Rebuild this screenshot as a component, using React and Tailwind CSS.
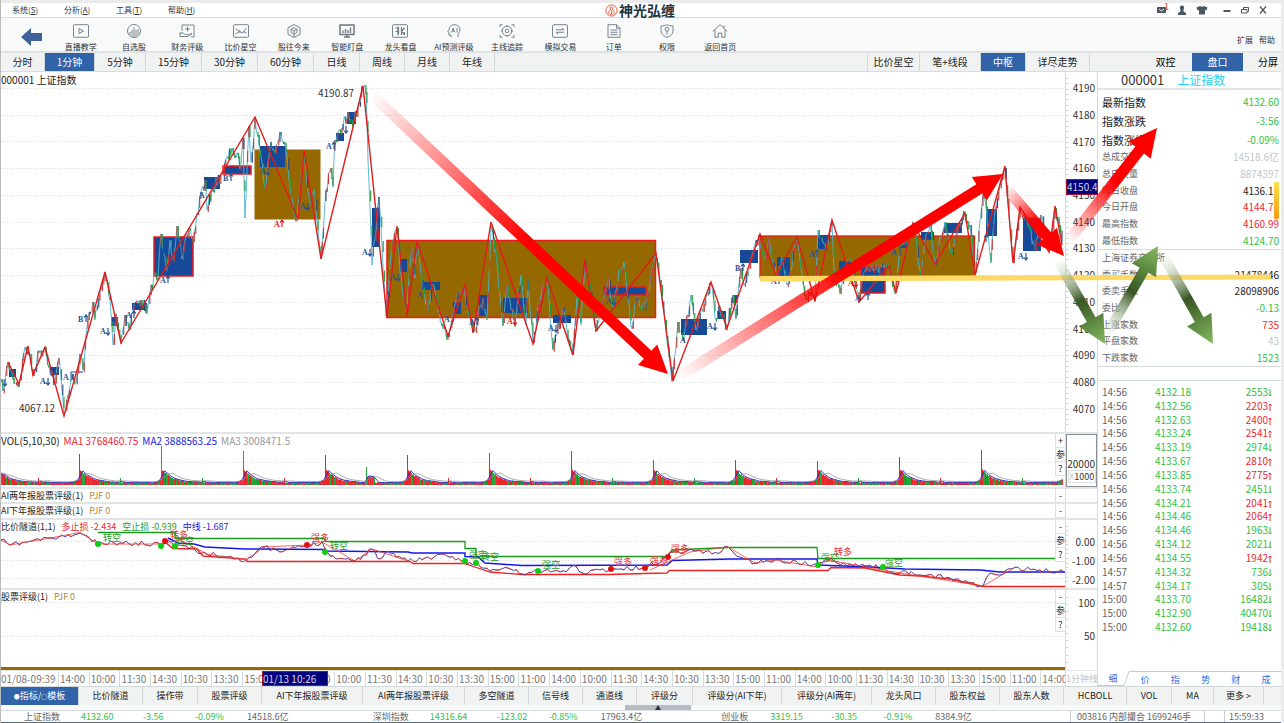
import React from 'react';
import clsx from 'clsx';

const MENUS = [
  ['系统', 'S'],
  ['分析', 'A'],
  ['工具', 'T'],
  ['帮助', 'H'],
];

const TOOLS = [
  { label: '直播教学', icon: 'live' },
  { label: '自选股', icon: 'pick' },
  { label: '财务评级', icon: 'finance' },
  { label: '比价星空', icon: 'compare' },
  { label: '股往今来', icon: 'cube' },
  { label: '智能盯盘', icon: 'monitor' },
  { label: '龙头看盘', icon: 'dragon' },
  { label: 'AI预测评级', icon: 'ai' },
  { label: '主线追踪', icon: 'target' },
  { label: '模拟交易', icon: 'swap' },
  { label: '订单', icon: 'order' },
  { label: '权限', icon: 'shield' },
  { label: '返回首页', icon: 'home' },
];

const PERIODS = [
  { label: '分时', w: 'w-[44px]' },
  { label: '1分钟', w: 'w-[50px]', active: true },
  { label: '5分钟', w: 'w-[51px]' },
  { label: '15分钟', w: 'w-[56px]' },
  { label: '30分钟', w: 'w-[56px]' },
  { label: '60分钟', w: 'w-[56px]' },
  { label: '日线', w: 'w-[46px]' },
  { label: '周线', w: 'w-[45px]' },
  { label: '月线', w: 'w-[45px]' },
  { label: '年线', w: 'w-[45px]' },
];

const VIEWS = [
  { label: '比价星空', w: 'w-[52px]' },
  { label: '笔+线段', w: 'w-[61px]' },
  { label: '中枢', w: 'w-[45px]', active: true },
  { label: '详尽走势', w: 'w-[64px]' },
];

const INDICATORS = [
  { label: '比价隧道', w: 'w-[64px]' },
  { label: '操作带', w: 'w-[55px]' },
  { label: '股票评级', w: 'w-[64px]' },
  { label: 'AI下年报股票评级', w: 'w-[101px]' },
  { label: 'AI两年报股票评级', w: 'w-[102px]' },
  { label: '多空隧道', w: 'w-[64px]' },
  { label: '信号线', w: 'w-[54px]' },
  { label: '通道线', w: 'w-[54px]' },
  { label: '评级分', w: 'w-[56px]' },
  { label: '评级分(AI下年)', w: 'w-[89px]' },
  { label: '评级分(AI两年)', w: 'w-[90px]' },
  { label: '龙头风口', w: 'w-[64px]' },
  { label: '股东权益', w: 'w-[64px]' },
  { label: '股东人数', w: 'w-[64px]' },
  { label: 'HCBOLL', w: 'w-[63px]' },
  { label: 'VOL', w: 'w-[45px]' },
  { label: 'MA', w: 'w-[42px]' },
  { label: '更多 >', w: 'w-[50px]' },
];

const UP = 'text-[#ea2a30]';
const DOWN = 'text-[#2fbf45]';
const MUTED = 'text-[#c4c4c4]';
const DARK = 'text-[#222]';

const HEADLINE = [
  ['最新指数', '4132.60', DOWN],
  ['指数涨跌', '-3.56', DOWN],
  ['指数涨幅', '-0.09%', DOWN],
];

const SUMMARY = [
  ['总成交额', '14518.6亿', MUTED],
  ['总成交量', '8874397', MUTED],
  ['昨日收盘', '4136.16', DARK],
  ['今日开盘', '4144.76', UP],
  ['最高指数', '4160.99', UP],
  ['最低指数', '4124.70', DOWN],
];

const EXCHANGE = [
  ['上海证券交易所', '', DARK],
  ['委买手数', '21478446', DARK],
  ['委卖手数', '28098906', DARK],
  ['委比', '-0.13', DOWN],
  ['上涨家数', '735', UP],
  ['平盘家数', '43', MUTED],
  ['下跌家数', '1523', DOWN],
];

const TICKS = [
  ['14:56', '4132.18', 2553, 0],
  ['14:56', '4132.56', 2203, 1],
  ['14:56', '4132.63', 2400, 1],
  ['14:56', '4133.24', 2541, 1],
  ['14:56', '4133.19', 2974, 0],
  ['14:56', '4133.67', 2810, 1],
  ['14:56', '4133.85', 2775, 1],
  ['14:56', '4133.74', 2451, 0],
  ['14:56', '4134.21', 2041, 1],
  ['14:56', '4134.46', 2064, 1],
  ['14:56', '4134.46', 1963, 0],
  ['14:56', '4134.12', 2021, 0],
  ['14:56', '4134.55', 1942, 1],
  ['14:57', '4134.32', 736, 0],
  ['14:57', '4134.17', 305, 0],
  ['15:00', '4133.70', 16482, 0],
  ['15:00', '4132.90', 40470, 0],
  ['15:00', '4132.60', 19418, 0],
];

const PRICE_LEVELS = [4190, 4180, 4170, 4160, 4150, 4140, 4130, 4120, 4110, 4100, 4090, 4080, 4070];
const TIME_CYCLE = ['14:00', '10:00', '11:30', '14:30', '10:30', '13:30', '15:00', '11:00'];

// price path, drawn with a little noise on top
const PATH = [
  [1, 380], [3, 391], [8, 362], [13, 378], [19, 384], [25, 347], [29, 352], [33, 374], [39, 351], [45, 347], [49, 366],
  [55, 383], [59, 358], [64, 413], [71, 378], [76, 383], [80, 354], [83, 370], [88, 318], [93, 302], [95, 318], [105, 273],
  [110, 298], [113, 345], [116, 314], [121, 342], [125, 315], [129, 328], [134, 305], [141, 300], [147, 312], [154, 275],
  [158, 278], [161, 234], [166, 270], [170, 240], [173, 260], [177, 226], [182, 259], [189, 228], [193, 240], [201, 192],
  [205, 180], [207, 210], [212, 190], [222, 172], [232, 148], [241, 166], [243, 138], [245, 218], [249, 126], [251, 162],
  [255, 118], [258, 135], [265, 188], [271, 142], [275, 152], [280, 132], [286, 150], [293, 205], [297, 219], [304, 152],
  [310, 206], [314, 190], [321, 259], [326, 190], [331, 168], [333, 185], [335, 140], [342, 128], [348, 112], [354, 122],
  [363, 87], [366, 92], [368, 160], [372, 265], [379, 197], [386, 316], [392, 240], [397, 228], [400, 270], [406, 312],
  [412, 247], [415, 278], [417, 243], [422, 280], [428, 311], [434, 285], [438, 312], [448, 335], [458, 292], [464, 287],
  [470, 316], [474, 330], [483, 298], [487, 318], [491, 226], [497, 262], [503, 325], [507, 285], [515, 325], [521, 275],
  [526, 325], [528, 280], [533, 343], [540, 300], [547, 278], [553, 350], [563, 307], [572, 354], [577, 298], [581, 325],
  [585, 262], [596, 329], [608, 278], [613, 308], [619, 270], [624, 262], [631, 327], [637, 298], [646, 308], [655, 255],
  [660, 280], [665, 320], [672, 380], [678, 322], [684, 338], [691, 295], [696, 330], [703, 310], [711, 283], [715, 318],
  [720, 310], [727, 327], [733, 295], [736, 318], [741, 268], [744, 285], [752, 255], [759, 235], [764, 260], [769, 238],
  [776, 275], [783, 258], [787, 285], [797, 239], [806, 298], [811, 292], [815, 300], [818, 230], [826, 250], [832, 221],
  [834, 270], [840, 292], [846, 265], [852, 262], [859, 301], [862, 280], [868, 270], [884, 268], [889, 267], [895, 292],
  [900, 245], [905, 240], [913, 225], [921, 273], [926, 235], [930, 225], [935, 263], [945, 222], [951, 252], [957, 230],
  [965, 214], [970, 225], [975, 274], [983, 195], [985, 200], [991, 261], [995, 210], [1005, 168], [1013, 261], [1020, 208],
  [1028, 225], [1035, 250], [1041, 215], [1049, 250], [1055, 208], [1062, 243],
];

const ZIGZAG =
  '8,362 19,384 28,346 33,375 45,347 64,416 105,272 121,343 255,117 298,219 304,150 321,259 363,86 387,318 397,226 407,316 417,241 448,336 465,284 473,333 491,222 533,344 547,278 573,355 585,259 596,331 656,253 673,381 711,282 727,328 760,234 776,275 797,237 815,301 832,220 859,302 889,266 896,293 913,223 935,264 965,213 975,275 1005,166 1013,263 1020,207 1049,252 1055,206 1062,245';

// x, y, width, height, outlined
const BLUE_BOXES = [
  [9, 369, 7, 8], [50, 367, 9, 8], [111, 317, 7, 9], [132, 303, 15, 7], [154, 237, 39, 39, 1], [204, 177, 16, 12],
  [223, 166, 28, 8, 1], [260, 146, 25, 21], [336, 133, 8, 8], [347, 112, 9, 12], [372, 208, 8, 39], [400, 259, 7, 13],
  [422, 282, 18, 8], [453, 302, 8, 12], [479, 295, 8, 21], [503, 298, 25, 15], [553, 315, 18, 8], [604, 287, 42, 8, 1],
  [681, 319, 26, 16], [717, 311, 9, 8], [732, 295, 6, 8], [740, 250, 18, 13], [777, 257, 13, 19], [818, 235, 10, 14],
  [839, 261, 12, 9], [861, 267, 24, 26, 1], [900, 238, 7, 10], [921, 232, 13, 8], [944, 223, 18, 10], [986, 209, 11, 27],
  [1023, 218, 18, 33],
];

// x, baseline, letter, direction
const MARKS = [
  [-3, 385, '', -1], [40, 384, 'A', -1], [63, 380, 'A', 0], [78, 322, 'B', 1], [100, 334, 'A', -1], [126, 318, 'A', 1],
  [160, 283, 'A', 1], [199, 198, 'A', 0], [223, 181, 'B', 1], [260, 174, 'A', -1], [300, 209, 'A', -1], [326, 149, 'A', 1],
  [338, 132, '', -1], [362, 255, 'A', -1], [390, 280, 'A', -1], [417, 298, 'A', 0], [444, 322, 'A', 0], [469, 325, 'A', 1],
  [548, 331, 'A', -1], [606, 304, 'A', -1], [680, 343, 'A', 0], [707, 329, 'A', -1], [735, 271, 'B', 1], [771, 284, 'A', 1],
  [809, 257, 'A', 1], [855, 301, 'A', 0], [860, 300, '', 1], [891, 255, 'A', 0], [978, 242, '', 1], [1018, 259, 'A', -1],
];

const RED_MARKS = [
  [274, 227, 'A', 1], [507, 324, 'A', -1], [848, 286, 'A', -1],
];

function seeded(seed) {
  let s = seed;
  return () => {
    s = (s * 16807) % 2147483647;
    return s / 2147483647;
  };
}

function jitter(points, step, amount, seed) {
  const rnd = seeded(seed);
  const out = [];
  for (let i = 0; i < points.length - 1; i++) {
    const [x0, y0] = points[i];
    const [x1, y1] = points[i + 1];
    const n = Math.max(1, Math.round((x1 - x0) / step));
    for (let k = 0; k < n; k++) {
      const t = k / n;
      const off = k === 0 ? 0 : (rnd() - 0.5) * amount;
      out.push([x0 + (x1 - x0) * t, y0 + (y1 - y0) * t + off]);
    }
  }
  out.push(points[points.length - 1]);
  return out;
}

const toPoints = (list) => list.map(([x, y]) => `${x.toFixed(1)},${y.toFixed(1)}`).join(' ');

const PRICE = jitter(PATH, 1.3, 12, 7);
const CANDLES = PRICE.slice(1).map((p, i) => ({
  x: p[0],
  y0: PRICE[i][1],
  y1: p[1],
}));

const SPIKES = [30, 31, 39, 34, 30, 30, 32, 34, 25, 25, 24, 28, 35];
const GREEN_SPIKES = [2, 3];

const VOLUME = (() => {
  const rnd = seeded(42);
  const bars = [];
  for (let s = 0; s < 13; s++) {
    for (let t = 0; t < 82; t++) {
      const x = -3 + s * 82 + t;
      if (x < 1 || x > 1063) continue;
      const late = t > 74 ? (t - 74) * 0.4 : 0;
      let h = 1.8 + 14 * Math.exp(-t / 10) + late + rnd() * 1.3;
      let green = rnd() > 0.52;
      if (t === 0) {
        h = SPIKES[s];
        green = GREEN_SPIKES.includes(s);
      }
      if (t === 1) green = false;
      if (t === 41) h = s === 4 ? 18 : 7;
      if (s === 4 && t > 41 && t < 50) h += 6;
      bars.push({ x, h, green });
    }
  }
  return bars;
})();

const smooth = (n, lift) =>
  VOLUME.map((b, i) => {
    const from = Math.max(0, i - n);
    const part = VOLUME.slice(from, i + 1);
    return [b.x, 485 - lift - part.reduce((a, p) => a + Math.min(p.h, 18), 0) / part.length];
  });

const TUNNEL_PRICE = jitter(
  [
    [1, 540], [10, 545], [50, 538], [65, 537], [80, 533], [98, 544], [120, 543], [160, 544], [168, 540], [180, 545],
    [195, 550], [207, 554], [232, 557], [246, 560], [264, 547], [280, 552], [308, 545], [322, 542], [330, 556], [345, 559],
    [355, 561], [372, 549], [380, 559], [388, 551], [408, 561], [425, 558], [447, 556], [464, 561], [475, 564], [490, 571],
    [508, 568], [522, 574], [538, 571], [560, 572], [576, 566], [582, 573], [600, 570], [645, 568], [667, 557], [672, 552],
    [700, 550], [712, 554], [728, 547], [740, 557], [755, 563], [775, 560], [817, 565], [828, 560], [850, 564], [870, 565],
    [900, 573], [920, 575], [950, 578], [983, 586], [990, 573], [1000, 575], [1012, 569], [1040, 570], [1064, 572],
  ],
  3,
  5,
  11
);

const SIGNALS = [
  [103, 541, '转空', 0], [170, 538, '转多', 1], [176, 544, '转空', 0], [311, 541, '强多', 1], [330, 549, '转空', 0],
  [469, 558, '强空', 0], [481, 560, '转空', 0], [542, 568, '强空', 0], [614, 565, '强多', 1], [650, 564, '强多', 1],
  [671, 552, '强多', 1], [821, 561, '强空', 0], [834, 555, '转多', 1], [885, 566, '强空', 0],
];

const DOTS = [
  [98, 544, 0], [161, 546, 0], [175, 546, 0], [325, 552, 0], [465, 561, 0], [476, 563, 0], [538, 571, 0], [818, 565, 0],
  [883, 567, 0], [165, 541, 1], [307, 545, 1], [611, 569, 1], [645, 568, 1], [668, 557, 1],
];

const ICONS = {
  live: (
    <>
      <rect x="0.5" y="0.7" width="15" height="12.600" rx="1" />
      <path d="M6 4.5v5l4.5-2.5z" />
    </>
  ),
  pick: (
    <>
      <circle cx="8" cy="7" r="6.5" />
      <path d="M4 8v3M6 6v6.500M8 3.5v10M10 6v6.500M12 5v6" />
    </>
  ),
  finance: (
    <>
      <path d="M3 7V1h12v12h-3M8.5 2.5v5M6 5h5" />
      <path d="M1 8.5v4.5M1 12.5h8l4-2.5c-1-1-2 0-3.500.5H6.500M1 9h3l2 1.500" />
    </>
  ),
  compare: (
    <>
      <rect x="0.500" y="0.7" width="15" height="12.600" rx="1" />
      <path d="M2.500 10l4-2.500 3 1.500 4-5M2.500 5l3 1.500M10 7.500l3.500 1.500" />
      <circle cx="6.500" cy="7.500" r="0.700" />
    </>
  ),
  cube: (
    <>
      <path d="M8 0.500l6 3.200v6.600L8 13.500l-6-3.200V3.700z" />
      <path d="M8 3.700l3 1.600v3.200L8 10.200 5 8.500V5.300zM8 7v6M8 7l3-1.700M8 7L5 5.300" />
    </>
  ),
  monitor: (
    <>
      <path strokeWidth="1.500" d="M1 1h14v9.500H1zM5 13h6M8 11v2" />
      <path strokeWidth="1.300" d="M4 6.500V9M6.500 5v4M9 6v3M11.500 3.500V9" />
    </>
  ),
  dragon: (
    <>
      <rect x="0.500" y="0.7" width="15" height="12.600" rx="1" />
      <path strokeWidth="1.200" d="M3.500 4h3v6M3.500 7.500h3M6 2.500v9M9.500 3v8M9.500 7L12.500 4M9.500 7l3 4M12.500 8v3" />
    </>
  ),
  ai: (
    <>
      <path d="M5 13.300V11H3V8.500L1.700 7.500 3 5.500C3 2.500 5.500 0.700 8.300 0.700c3.500 0 5.700 2.300 5.700 5.300 0 2.500-2 3.500-2 5v2.300" />
      <path d="M5.500 8.500L7.200 4l1.700 4.500M6 7h2.400M11 4v4.500" />
    </>
  ),
  target: (
    <>
      <circle cx="8" cy="7" r="4.800" />
      <circle cx="8" cy="7" r="1.800" />
      <path d="M1 3V0.700h2.500M15 3V0.700h-2.500M1 11v2.300h2.500M15 11v2.300h-2.500M8 1v1.500M8 11.500V13M2 7h1.500M12.500 7H14" />
    </>
  ),
  swap: (
    <>
      <rect x="0.500" y="0.7" width="15" height="12.600" rx="1.500" />
      <path d="M4 5.800h8L9.800 4M12 8.300H4l2.200 1.800" />
    </>
  ),
  order: (
    <>
      <path d="M2 0.700h8.500l3.500 3.500v9.100H2zM10.500 0.700v3.500H14" />
      <path d="M4.500 6h7M4.500 8.300h7M4.500 10.600h7" />
    </>
  ),
  shield: (
    <>
      <path d="M8 0.700c2 1 4 1.300 6 1.300v5c0 3-2.500 5.300-6 6.300-3.500-1-6-3.300-6-6.300V2c2 0 4-0.300 6-1.300z" />
      <circle cx="8" cy="5.200" r="1.900" />
      <path d="M8 7v3.500" />
    </>
  ),
  home: (
    <path d="M0.700 7.500L8 0.700l7.300 6.800M3 6v7.300h3.300V9h3.400v4.300H13V6M12 1.500v2.500" />
  ),
};

const ToolIcon = ({ name }) => (
  <svg viewBox="0 0 16 14" className="h-[14px] w-4" fill="none" stroke="#6d7680" strokeWidth="0.9">
    {ICONS[name]}
  </svg>
);

const TitleBar = () => (
  <header className="flex h-[15px] items-center border-b border-[#d9dddf] bg-white">
    <nav className="flex flex-1 items-center pl-[11px]">
      {MENUS.map(([label, key]) => (
        <button key={label} className="w-[52px] text-left text-[8px] leading-3 text-[#333]">
          {label}(<u>{key}</u>)
        </button>
      ))}
    </nav>
    <div className="flex items-center gap-px">
      <svg viewBox="0 0 14 14" className="size-[13px]" fill="none" stroke="#e8502f">
        <circle cx="7" cy="7" r="6" strokeWidth="1" />
        <path d="M7 3c-2 0-2 2.500-0.500 3-2.500 0.500-3 3-2 5M7 3c2 0 2 2.500 0.500 3 2.500 0.500 3 3 2 5M7 7v4M5.500 11h3" strokeWidth="1" />
      </svg>
      <h1 className="text-[14px] leading-[14px] font-bold text-[#22343c]">神光弘缠</h1>
    </div>
    <div className="flex flex-1 items-center justify-end gap-2 pr-[13px] text-[#4a5660]">
      <button aria-label="消息" className="relative">
        <svg viewBox="0 0 12 10" className="h-[10px] w-3" fill="currentColor">
          <rect x="1" y="2" width="9" height="6" rx="1" />
          <path d="M3 4l2.500 2L8 4" stroke="#fff" fill="none" />
        </svg>
        <span className="absolute -top-[3px] -right-px text-[9px] leading-[10px] text-[#f33]">1</span>
      </button>
      <button aria-label="用户">
        <svg viewBox="0 0 12 10" className="h-[10px] w-3" fill="currentColor">
          <circle cx="6" cy="2.700" r="2.200" />
          <path d="M4.800 4h2.400l0.500 2.500L10 8v2H2V8l2.300-1.500z" />
        </svg>
      </button>
      <button aria-label="皮肤" className="mr-[6px]">
        <svg viewBox="0 0 12 10" className="h-[10px] w-3" fill="currentColor">
          <path d="M4 1c1 1 3 1 4 0l3.500 1.500-1 2.800L9 5v4.500H3V5l-1.500 0.300-1-2.800z" />
        </svg>
      </button>
      <button aria-label="最小化">
        <svg viewBox="0 0 10 10" className="size-[10px]" stroke="currentColor">
          <path d="M1.500 6h7" strokeWidth="2" />
        </svg>
      </button>
      <button aria-label="还原">
        <svg viewBox="0 0 10 10" className="size-[10px]" fill="none" stroke="currentColor">
          <path d="M3.500 4V2.500h5v4H7.500M1.500 4.500h5.500v3.500H1.500z" />
        </svg>
      </button>
      <button aria-label="关闭">
        <svg viewBox="0 0 10 10" className="size-[10px]" stroke="currentColor" strokeWidth="1.200">
          <path d="M2 1.500l6 7M8 1.500l-6 7" />
        </svg>
      </button>
    </div>
  </header>
);

const Toolbar = () => (
  <div className="flex h-[35px] border-b-2 border-[#dfe3e5] bg-[#f8f9f9]">
    <button aria-label="返回" className="flex w-[53px] items-center justify-end pt-1 pr-3">
      <svg viewBox="0 0 21 18" className="h-[18px] w-[21px]" fill="#40619a">
        <path d="M0 9L10 0v5h11v8H10v5z" />
      </svg>
    </button>
    <div className="grid w-[693px] grid-cols-13">
      {TOOLS.map((tool) => (
        <button key={tool.label} className="flex flex-col items-center gap-[4px] pt-[6px]">
          <ToolIcon name={tool.icon} />
          <span className="text-[8px] leading-[10px] whitespace-nowrap text-[#2b3238]">{tool.label}</span>
        </button>
      ))}
    </div>
    <div className="flex flex-1 items-center justify-end gap-[6px] pt-[10px] pr-[6px] text-[8px] text-[#333]">
      <button>扩展</button>
      <button>帮助</button>
    </div>
  </div>
);

const Tab = ({ item, children }) => (
  <button
    className={clsx(
      'flex-none border-r border-[#d3d8da] text-center whitespace-nowrap',
      item.w,
      item.active ? 'bg-[#3163a9] text-white' : 'text-[#222]'
    )}
  >
    {children || item.label}
  </button>
);

const PeriodBar = () => (
  <div className="flex h-[19px] border-b border-[#d9dddf] bg-[#f1f3f3] text-[10px] leading-[18px]">
    {PERIODS.map((p) => (
      <Tab key={p.label} item={p} />
    ))}
    <div className="flex flex-1 justify-end">
      <div className="flex border-l border-[#d3d8da]">
        {VIEWS.map((p) => (
          <Tab key={p.label} item={p} />
        ))}
      </div>
    </div>
    <div className="flex w-[191px] justify-end">
      <button className="w-[53px]">双控</button>
      <button className="w-[51px] bg-[#3163a9] text-white">盘口</button>
      <button className="w-[38px] pl-3">分屏</button>
    </div>
  </div>
);

const Grid = ({ rows }) => (
  <g stroke="#d5dadb" strokeDasharray="1 2">
    {rows.map((y) => (
      <path key={y} d={`M1 ${y}.5H1065`} />
    ))}
  </g>
);

const Marks = ({ list, color }) => (
  <g fontFamily="Liberation Serif, serif" fontWeight="bold" fontSize="8" fill={color}>
    {list.map(([x, y, letter, dir]) => (
      <g key={x}>
        {letter && <text x={x} y={y}>{letter}</text>}
        {dir !== 0 && (
          <path
            d={dir > 0 ? `M${x + 8} ${y}v-7m-2 2.500l2-2.500l2 2.500` : `M${x + 8} ${y - 6}v7m-2-2.500l2 2.500l2-2.500`}
            fill="none"
            stroke={color}
            strokeWidth="1.200"
          />
        )}
      </g>
    ))}
  </g>
);

const PriceChart = () => (
  <svg viewBox="1 72 1064 360" preserveAspectRatio="none" className="min-h-[360px] w-full flex-1">
    <Grid rows={PRICE_LEVELS.map((_, i) => Math.round(88 + i * 26.7))} />
    <rect x="254.5" y="149.5" width="66" height="70" fill="#966900" />
    <rect x="387" y="240.500" width="268.500" height="77" fill="#966900" stroke="#f01818" strokeWidth="1.500" />
    <rect x="760" y="236" width="214.500" height="41" fill="#966900" stroke="#f01818" strokeWidth="1.300" />
    {BLUE_BOXES.map(([x, y, w, h, outlined]) => (
      <rect key={x} x={x} y={y} width={w} height={h} fill="#164a98" stroke={outlined ? '#f01818' : 'none'} strokeWidth="1.500" />
    ))}
    <path d="M71 381v-9h12" fill="none" stroke="#164a98" />
    <polyline points={toPoints(PRICE)} fill="none" stroke="#4fb0cf" strokeWidth="0.900" />
    {CANDLES.map((c, i) => {
      if (i % 4 === 3) return null;
      const up = c.y1 < c.y0;
      const top = Math.min(c.y0, c.y1);
      const len = Math.min(11, Math.abs(c.y1 - c.y0) + 2);
      return (
        <path
          key={i}
          d={`M${c.x.toFixed(1)} ${top.toFixed(1)}v${len.toFixed(1)}`}
          stroke={i % 7 === 0 ? '#24477e' : up ? '#c23a35' : '#1f9a3c'}
          strokeWidth="1.100"
        />
      );
    })}
    <polyline points={ZIGZAG} fill="none" stroke="#e01c1c" strokeWidth="1.400" />
    <Marks list={MARKS} color="#2b5190" />
    <Marks list={RED_MARKS} color="#f01010" />
    <g fontSize="10" fill="#333">
      <text x="318" y="97">4190.87</text>
      <text x="19" y="412">4067.12</text>
    </g>
  </svg>
);

const VolumeChart = () => (
  <svg viewBox="1 434 1064 53" preserveAspectRatio="none" className="h-[53px] w-full">
    <Grid rows={[462]} />
    {VOLUME.map((b) => (
      <rect key={b.x} x={b.x} y={485 - b.h} width="1" height={b.h} fill={b.green ? '#27a53a' : '#e8262b'} />
    ))}
    <polyline points={toPoints(smooth(4, 0).filter((_, i) => i % 2 === 0))} fill="none" stroke="#2929c8" strokeWidth="0.900" />
    <polyline points={toPoints(smooth(12, 1).filter((_, i) => i % 4 === 0))} fill="none" stroke="#8c8c8c" strokeWidth="0.700" />
  </svg>
);

const TunnelChart = () => (
  <svg viewBox="1 520 1064 68" preserveAspectRatio="none" className="h-[68px] w-full">
    <Grid rows={[541, 560, 578]} />
    <g fill="none" strokeWidth="1.300">
      <polyline
        stroke="#1d9a1d"
        points="98,532.500 175,532.500 175,538.500 325,538.500 325,541.500 465,541.500 465,548.500 476,548.500 476,556.500 667,556.500 672,550 728,547.500 817,547.500 818,558.500 1065,558.500"
      />
      <polyline
        stroke="#ee2222"
        points="165,542 173,548.500 197,549 203,556 246,559 247,561.500 410,561.500 413,563.500 464,563.500 475,567 490,572 522,574.500 610,574.500 645,573.500 667,573 669,570.500 828,570.500 831,567.500 865,568 900,575 920,576 950,579 983,586.500 1065,586.500"
      />
      <polyline
        stroke="#1515ee"
        strokeWidth="1.500"
        points="168,538 178,543 194,544 205,547 245,549 325,549.500 326,551 408,552 412,553 465,553 465,556.500 478,557 485,563 522,565.500 667,565 672,560.500 730,559 817,559 818,565 870,567 905,569 980,570 1000,572 1065,572"
      />
      <polyline stroke="#2c2ca8" strokeWidth="0.900" points={toPoints(TUNNEL_PRICE)} />
      <polyline stroke="#e04030" strokeWidth="0.900" strokeDasharray="6 5" points={toPoints(TUNNEL_PRICE)} />
      <polyline
        stroke="#ee4433"
        strokeWidth="0.800"
        points="1,540 10,545 50,538 80,532.500 98,544 160,544 180,540 207,554 246,560 264,547 308,545 322,542 355,561 372,549 408,561"
      />
      <polyline stroke="#ee4433" strokeWidth="0.800" points="650,570 690,552 728,547 755,563 775,560 817,567 828,560 900,573 983,586 1012,569" />
    </g>
    {DOTS.map(([x, y, red]) => (
      <circle key={x} cx={x} cy={y} r="3" fill={red ? '#dd1111' : '#11cc11'} />
    ))}
    <g fontSize="9">
      {SIGNALS.map(([x, y, t, red]) => (
        <text key={x} x={x} y={y} fill={red ? '#ee2a2a' : '#2c9a2c'}>{t}</text>
      ))}
    </g>
  </svg>
);

const RatingChart = () => (
  <svg viewBox="1 590 1064 80" preserveAspectRatio="none" className="h-[80px] w-full">
    <Grid rows={[602, 636]} />
    <rect x="1" y="667" width="1064" height="3" fill="#966900" />
  </svg>
);

const AxisTicks = ({ count }) => (
  <div className="absolute inset-y-0 left-0 flex flex-col justify-around py-1">
    {Array.from({ length: count }, (_, i) => (
      <i key={i} className="block h-px w-[2px] bg-[#ccd2d4]" />
    ))}
  </div>
);

const Pane = ({ className, title, controls, children, axis }) => (
  <section className={clsx('flex border-t-2 border-[#e1e5e6]', className)}>
    <div className="relative min-w-0 flex-1">
      {children}
      <h2 className="absolute top-0 left-0 flex gap-[6px] text-[9px] leading-[14px] whitespace-nowrap text-[#222]">{title}</h2>
      <div className="absolute top-0 right-0 flex w-[10px] flex-col border-l border-[#dde1e2] bg-white text-[9px] leading-[13px] text-[#222]">
        {controls.map((c) => (
          <button key={c} className="h-[14px] overflow-hidden border-b border-[#dde1e2]">{c}</button>
        ))}
      </div>
    </div>
    <div className="relative w-8 border-l border-[#d5dadb] text-right text-[10px] text-[#333]">{axis}</div>
  </section>
);

const TimeAxis = () => (
  <div className="flex h-4 border-t border-[#e1e5e6] text-[10px] leading-[15px] text-[#777]">
    <div className="relative flex min-w-0 flex-1 overflow-hidden">
      <span className="w-[57px] flex-none whitespace-nowrap">01/08-09:39</span>
      <div className="grid w-[1013px] flex-none grid-cols-33">
        {Array.from({ length: 33 }, (_, i) => (
          <span key={i} className="border-l border-[#d5dadb] pl-px">{TIME_CYCLE[i % 8]}</span>
        ))}
      </div>
      <span className="absolute top-0 left-[261px] w-[66px] border border-[#a01030] bg-[#00007c] leading-[13px] text-[#d8d8e8]">
        01/13 10:26
      </span>
    </div>
    <span className="w-8 overflow-hidden border-l border-[#d5dadb] text-[9px] whitespace-nowrap text-[#c4c4c4]">1分钟线</span>
  </div>
);

const Charts = () => (
  <div className="flex min-w-0 flex-1 flex-col bg-white">
    <section className="flex flex-1">
      <div className="relative flex min-w-0 flex-1 flex-col">
        <PriceChart />
        <h2 className="absolute top-0 left-0 text-[10px] leading-[15px] text-[#222]">000001 上证指数</h2>
      </div>
      <div className="relative grid w-8 grid-rows-13 items-center border-l border-[#d5dadb] pt-[3px] pr-[2px] pb-[10px] text-right text-[10px] text-[#333]">
        <AxisTicks count={66} />
        {PRICE_LEVELS.map((p) => (
          <span key={p} className="leading-3">{p}</span>
        ))}
        <span className="absolute top-[107px] left-0 h-4 w-8 overflow-hidden border border-[#a01030] bg-[#00007c] text-left leading-[14px] whitespace-nowrap text-[#d0d0e0]">
          4150.48
        </span>
      </div>
    </section>
    <Pane
      className="h-[55px]"
      title={
        <span className="flex gap-1 text-[10px]">
          <span>VOL(5,10,30)</span>
          <span className="text-[#ea2a30]">MA1 3768460.75</span>
          <span className="text-[#2222dd]">MA2 3888563.25</span>
          <span className="text-[#999]">MA3 3008471.5</span>
        </span>
      }
      controls={['+', '参', '?']}
      axis={
        <div className="h-full border border-[#8b9098] pt-[22px] leading-[13px]">
          <p className="pr-px text-[10px]">20000</p>
          <p className="ml-px border border-[#dde1e2] pr-[2px] text-[9px] leading-[11px]">
            <span className="text-[#ccc]">X</span>1000
          </p>
        </div>
      }
    >
      <VolumeChart />
    </Pane>
    <Pane className="h-[15px]" title={<><span>AI两年报股票评级(1)</span><span className="text-[#b08a3a]">PJF 0</span></>} controls={['-']} />
    <Pane className="h-4" title={<><span>AI下年报股票评级(1)</span><span className="text-[#b08a3a]">PJF 0</span></>} controls={['-']} />
    <Pane
      className="h-[70px]"
      title={
        <>
          <span>比价隧道(1,1)</span>
          <span className="text-[#ea2a30]">多止损 -2.434</span>
          <span className="text-[#2c9a2c]">空止损 -0.939</span>
          <span className="text-[#2222dd]">中线 -1.687</span>
        </>
      }
      controls={['-', '参', '?']}
      axis={
        <div className="flex flex-col pt-3 pr-[2px] leading-[19px]">
          <AxisTicks count={13} />
          <span>0.00</span>
          <span>-1.00</span>
          <span>-2.00</span>
        </div>
      }
    >
      <TunnelChart />
    </Pane>
    <Pane
      className="h-[82px]"
      title={<><span>股票评级(1)</span><span className="text-[#b08a3a]">PJF 0</span></>}
      controls={['-', '参', '?']}
      axis={
        <div className="flex flex-col gap-[19px] pt-[6px] pr-[2px] leading-[14px]">
          <AxisTicks count={10} />
          <span>100</span>
          <span>50</span>
        </div>
      }
    >
      <RatingChart />
    </Pane>
    <TimeAxis />
  </div>
);

const QuoteTable = ({ rows, className }) => (
  <table className={clsx('w-full', className)}>
    <tbody>
      {rows.map(([label, value, tone]) => (
        <tr key={label}>
          <th scope="row" className="p-0 pl-1 text-left font-normal whitespace-nowrap">{label}</th>
          <td className={clsx('p-0 pr-[2px] text-right text-[10px]', tone)}>{value}</td>
        </tr>
      ))}
    </tbody>
  </table>
);

const QuotePanel = () => (
  <aside className="flex w-[184px] flex-none flex-col border-l border-[#d5dadb] bg-white leading-3">
    <h2 className="flex h-[18px] items-center gap-[13px] border-b-2 border-[#e1e5e6] pl-[23px]">
      <span className="text-[13px] text-[#333]">000001</span>
      <span className="text-[12px] text-[#19d3f0]">上证指数</span>
    </h2>
    <QuoteTable rows={HEADLINE} className="mt-[2px] h-[57px] text-[11px] text-[#222]" />
    <QuoteTable rows={SUMMARY} className="h-[100px] text-[9px] text-[#666]" />
    <div className="border-y border-[#d5dadb]">
      <QuoteTable rows={EXCHANGE} className="h-[116px] text-[9px] text-[#666]" />
    </div>
    <div className="mt-[13px] border-t border-[#d5dadb] pt-1">
      <table className="h-[249px] w-full text-[10px]">
        <tbody>
          {TICKS.map(([time, price, vol, up], i) => (
            <tr key={i}>
              <td className="w-[57px] p-0 pl-1 text-[#666]">{time}</td>
              <td className="p-0 text-[#2fbf45]">{price}</td>
              <td className={clsx('p-0 pr-[9px] text-right', up ? UP : DOWN)}>
                {vol}
                <svg viewBox="0 0 4 8" className="inline h-2 w-1 align-[-1px]" fill="none" stroke="currentColor">
                  <path d={up ? 'M2 8V1M0.500 2.500L2 1l1.500 1.500' : 'M2 0v7M0.500 5.500L2 7l1.500-1.500'} />
                </svg>
              </td>
            </tr>
          ))}
        </tbody>
      </table>
    </div>
    <div className="mt-auto flex h-[15px] text-[9px] leading-[15px] text-[#1f6fe0]">
      <button className="w-[26px] border-b border-[#c5cbce] pl-1">细</button>
      <svg viewBox="0 0 6 15" className="h-[15px] w-[6px]" fill="none" stroke="#c5cbce">
        <path d="M0 14.500L5 0.500h1" />
      </svg>
      <div className="grid flex-1 grid-cols-5 border-t border-[#c5cbce]">
        {['价', '指', '势', '财', '成'].map((t) => (
          <button key={t}>{t}</button>
        ))}
      </div>
    </div>
  </aside>
);

// block arrow from (x1, y1) to the tip (x2, y2)
const Arrow = ({ from, to, fill, id, width = 11, head = 28 }) => {
  const [x1, y1] = from;
  const [x2, y2] = to;
  const len = Math.hypot(x2 - x1, y2 - y1);
  const angle = (Math.atan2(y2 - y1, x2 - x1) * 180) / Math.PI;
  const h = width / 2;
  const neck = len - head;
  return (
    <g transform={`translate(${x1} ${y1}) rotate(${angle})`}>
      <linearGradient id={id} gradientUnits="userSpaceOnUse" x1="0" y1="0" x2={len} y2="0">
        {fill === 'red' ? (
          <>
            <stop offset="0" stopColor="#f00" stopOpacity="0" />
            <stop offset="0.520" stopColor="#f00" />
          </>
        ) : (
          <>
            <stop offset="0" stopColor="#e2efd9" stopOpacity="0.200" />
            <stop offset="0.480" stopColor="#375623" />
            <stop offset="1" stopColor="#85bb60" />
          </>
        )}
      </linearGradient>
      <path
        fill={`url(#${id})`}
        d={`M0 ${-h}H${neck}V${-head / 2}L${len} 0L${neck} ${head / 2}V${h}H0z`}
      />
    </g>
  );
};

const Annotations = () => (
  <svg viewBox="1 72 1280 614" preserveAspectRatio="none" className="pointer-events-none absolute inset-0 h-full w-full">
    <path d="M760 276L1271 274.500V279.500L760 281.500z" fill="#ffd966" />
    <Arrow id="a1" fill="red" from={[372, 95]} to={[668, 374]} />
    <Arrow id="a2" fill="red" from={[678, 377]} to={[1003, 174]} />
    <Arrow id="a3" fill="red" from={[1006, 188]} to={[1064, 256]} head={26} />
    <Arrow id="a4" fill="red" from={[1069, 240]} to={[1157, 128]} />
    <Arrow id="g1" fill="green" from={[1058, 261]} to={[1105, 344]} width={10} />
    <Arrow id="g2" fill="green" from={[1107, 334]} to={[1158, 246]} width={10} />
    <Arrow id="g3" fill="green" from={[1164, 257]} to={[1213, 344]} width={10} />
    <linearGradient id="pill" x1="0" y1="0" x2="0" y2="1">
      <stop offset="0" stopColor="#ffe04a" />
      <stop offset="1" stopColor="#f99a10" />
    </linearGradient>
    <rect x="1274" y="182" width="5" height="37" rx="1" fill="url(#pill)" />
  </svg>
);

const STATUS = [
  { name: '上证指数', price: '4132.60', diff: '-3.56', pct: '-0.09%', amount: '14518.6亿', cols: 'grid-cols-[57px_62px_52px_52px_1fr]' },
  { name: '深圳指数', price: '14316.64', diff: '-123.02', pct: '-0.85%', amount: '17963.4亿', cols: 'grid-cols-[57px_67px_52px_52px_1fr]' },
  { name: '创业板', price: '3319.15', diff: '-30.35', pct: '-0.91%', amount: '8384.9亿', cols: 'grid-cols-[49px_61px_52px_52px_1fr]' },
];

const StatusBar = () => (
  <footer className="flex h-3 border-b border-[#5f6a78] bg-white text-[9px] leading-[12px] whitespace-nowrap text-[#666]">
    <div className="grid flex-1 grid-cols-3 pl-[23px]">
      {STATUS.map((s) => (
        <div key={s.name} className={clsx('grid', s.cols)}>
          <span>{s.name}</span>
          <span className={DOWN}>{s.price}</span>
          <span className={DOWN}>{s.diff}</span>
          <span className={DOWN}>{s.pct}</span>
          <span>{s.amount}</span>
        </div>
      ))}
    </div>
    <span className="w-[134px] border-l border-[#c5cbce] pl-[6px]">003816 内部撮合 1699246手</span>
    <span className="w-5 border-l border-[#c5cbce]" />
    <time className="w-[57px] border-l border-[#c5cbce] pl-1">15:59:33</time>
  </footer>
);

const App = () => (
  <div className="flex min-h-screen flex-col overflow-hidden border-l border-[#bbb] bg-[#ebebeb] pt-[3px] pr-[3px] font-['Noto_Sans_CJK_SC','Noto_Sans',sans-serif]">
    <TitleBar />
    <Toolbar />
    <PeriodBar />
    <main className="relative flex flex-1">
      <Charts />
      <QuotePanel />
      <Annotations />
    </main>
    <nav className="flex h-[19px] overflow-hidden border-t border-[#d3d8da] bg-[#f1f3f3] text-[9px] leading-[18px]">
      <Tab item={{ w: 'w-[78px]', active: true }}>
        <span className="text-[6px]">●</span>指标/<span className="text-[6px]">○</span>模板
      </Tab>
      {INDICATORS.map((p) => (
        <Tab key={p.label} item={p} />
      ))}
    </nav>
    <div className="flex h-[6px] justify-center border-b border-[#d9dddf] bg-[#f8f9f9]">
      <div className="ml-[34px] flex w-[66px] justify-center bg-[#b4bdc5]">
        <svg viewBox="0 0 8 5" className="h-[5px] w-2" fill="#333">
          <path d="M4 0l3 5H1z" />
        </svg>
      </div>
    </div>
    <StatusBar />
  </div>
);

export default App;
